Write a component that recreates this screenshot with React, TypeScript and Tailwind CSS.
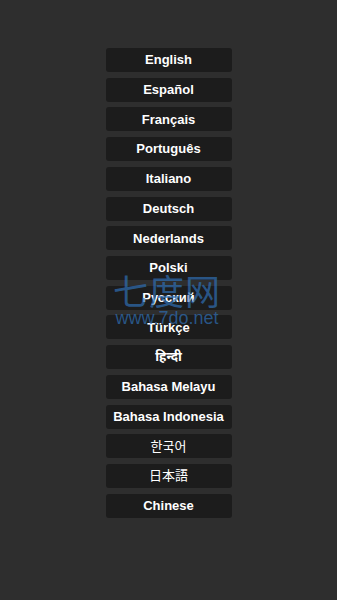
import React from "react";

const langs: { t: string; cjk?: boolean }[] = [
  { t: "English" },
  { t: "Español" },
  { t: "Français" },
  { t: "Português" },
  { t: "Italiano" },
  { t: "Deutsch" },
  { t: "Nederlands" },
  { t: "Polski" },
  { t: "Русский" },
  { t: "Türkçe" },
  { t: "हिन्दी" },
  { t: "Bahasa Melayu" },
  { t: "Bahasa Indonesia" },
  { t: "한국어", cjk: true },
  { t: "日本語", cjk: true },
  { t: "Chinese" },
];

export default function App() {
  return (
    <div className="relative w-[337px] h-[600px] bg-[#2e2e2e] overflow-hidden">
      <div className="flex flex-col items-center pt-[48px] gap-[5.73px]">
        {langs.map((l) => (
          <div
            key={l.t}
            className={
              l.cjk
                ? "w-[126px] h-[24px] rounded-[3px] bg-[#1c1c1c] flex items-center justify-center text-white text-[13px] font-normal"
                : "w-[126px] h-[24px] rounded-[3px] bg-[#1c1c1c] flex items-center justify-center text-white text-[13px] font-bold"
            }
            style={{ fontFamily: '"Liberation Sans", "Noto Sans", "Noto Sans CJK KR", "Noto Sans CJK JP", sans-serif' }}
          >
            {l.t}
          </div>
        ))}
      </div>
      <div className="pointer-events-none absolute left-[111px] top-[271px] w-[112px] flex flex-col items-center text-[#2f6fb5]/70">
        <div
          className="text-[35px] leading-[38px] font-normal tracking-[1px]"
          style={{ fontFamily: '"Noto Sans CJK SC", sans-serif' }}
        >
          七度网
        </div>
        <div
          className="text-[18px] leading-[18px]"
          style={{ fontFamily: '"Liberation Sans", sans-serif' }}
        >
          www.7do.net
        </div>
      </div>
    </div>
  );
}
